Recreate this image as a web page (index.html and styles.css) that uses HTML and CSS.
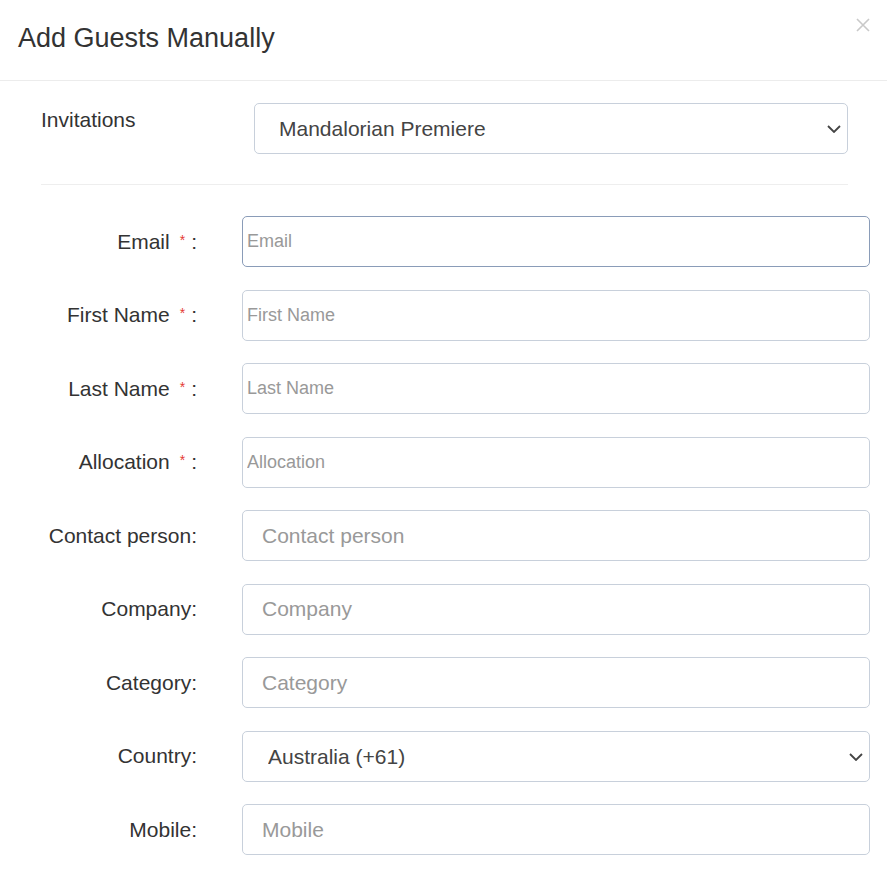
FILE: index.html
```html
<!DOCTYPE html>
<html lang="en">
<head>
    <meta charset="UTF-8">
    <meta name="viewport" content="width=device-width, initial-scale=1.0">
    <title>Add Guests Manually</title>
    <link rel="stylesheet" href="styles.css">
</head>
<body>

<div class="modal-header">
    <h4 class="modal-title">Add Guests Manually</h4>
    <button class="close" type="button" aria-label="Close">
        <svg width="14" height="14" viewBox="0 0 14 14">
            <path d="M1 1 L13 13 M13 1 L1 13" stroke="#c9c9c9" stroke-width="1.6" fill="none"/>
        </svg>
    </button>
</div>

<div class="modal-body">
    <div class="invite-row">
        <label class="invite-label">Invitations</label>
        <div class="select-wrap">
            <select class="form-select invite-select">
                <option>Mandalorian Premiere</option>
            </select>
            <svg class="chevron" width="14" height="8" viewBox="0 0 14 8">
                <path d="M1 1 L7 7 L13 1" stroke="#444" stroke-width="1.8" fill="none"/>
            </svg>
        </div>
    </div>

    <hr class="divider">

    <div class="guest-form">
        <label class="field-label">Email<span class="req">*</span>:</label>
        <input class="form-input small focused" type="text" placeholder="Email">

        <label class="field-label">First Name<span class="req">*</span>:</label>
        <input class="form-input small" type="text" placeholder="First Name">

        <label class="field-label">Last Name<span class="req">*</span>:</label>
        <input class="form-input small" type="text" placeholder="Last Name">

        <label class="field-label">Allocation<span class="req">*</span>:</label>
        <input class="form-input small" type="text" placeholder="Allocation">

        <label class="field-label">Contact person:</label>
        <input class="form-input" type="text" placeholder="Contact person">

        <label class="field-label">Company:</label>
        <input class="form-input" type="text" placeholder="Company">

        <label class="field-label">Category:</label>
        <input class="form-input" type="text" placeholder="Category">

        <label class="field-label">Country:</label>
        <div class="select-wrap">
            <select class="form-select country-select">
                <option>Australia (+61)</option>
            </select>
            <svg class="chevron" width="14" height="8" viewBox="0 0 14 8">
                <path d="M1 1 L7 7 L13 1" stroke="#444" stroke-width="1.8" fill="none"/>
            </svg>
        </div>

        <label class="field-label">Mobile:</label>
        <input class="form-input" type="text" placeholder="Mobile">
    </div>
</div>

</body>
</html>
```

FILE: styles.css
```css
body {
    margin: 0;
    font-family: "Liberation Sans", Arial, sans-serif;
    color: #333;
    background-color: #fff;
}
.modal-header {
    display: flex;
    justify-content: space-between;
    align-items: center;
    height: 81px;
    padding: 0 17px 0 18px;
    border-bottom: 1px solid #ececec;
    box-sizing: border-box;
}
.modal-title {
    margin: 0 0 3px 0;
    font-size: 27px;
    font-weight: 400;
    color: #333;
}
.close {
    align-self: flex-start;
    margin-top: 18px;
    padding: 0;
    border: none;
    background: none;
    width: 14px;
    height: 14px;
    line-height: 0;
}
.modal-body {
    padding-top: 22px;
}
.invite-row {
    display: flex;
    align-items: flex-start;
    padding: 0 39px 0 41px;
}
.invite-label {
    width: 213px;
    flex-shrink: 0;
    padding-top: 5px;
    font-size: 21px;
}
.select-wrap {
    position: relative;
    flex: 1;
}
.chevron {
    position: absolute;
    right: 7px;
    top: 22px;
    pointer-events: none;
}
.form-select {
    appearance: none;
    -webkit-appearance: none;
    width: 100%;
    height: 51px;
    box-sizing: border-box;
    padding: 0 30px 0 25px;
    border: 1px solid #c8d0db;
    border-radius: 5px;
    background-color: #fff;
    font-family: inherit;
    font-size: 21px;
    color: #444;
}
.invite-select {
    padding-left: 24px;
}
.divider {
    margin: 30px 39px 31px 41px;
    border: none;
    border-top: 1px solid #eeeeee;
}
.guest-form {
    display: grid;
    grid-template-columns: 197px 1fr;
    column-gap: 45px;
    row-gap: 22.5px;
    align-items: center;
    padding-right: 17px;
}
.field-label {
    text-align: right;
    font-size: 21px;
    color: #333;
    white-space: nowrap;
}
.req {
    display: inline-block;
    margin: 0 6px 0 10px;
    font-size: 14px;
    color: #e53935;
    vertical-align: 4px;
}
.form-input {
    height: 51px;
    box-sizing: border-box;
    padding: 0 19px;
    border: 1px solid #c8d0db;
    border-radius: 5px;
    font-family: inherit;
    font-size: 21px;
    color: #444;
    outline: none;
}
.form-input::placeholder {
    color: #999;
}
.form-input.small {
    padding: 0 4px;
    font-size: 18px;
}
.form-input.focused {
    border-color: #8a9cb8;
}
```
